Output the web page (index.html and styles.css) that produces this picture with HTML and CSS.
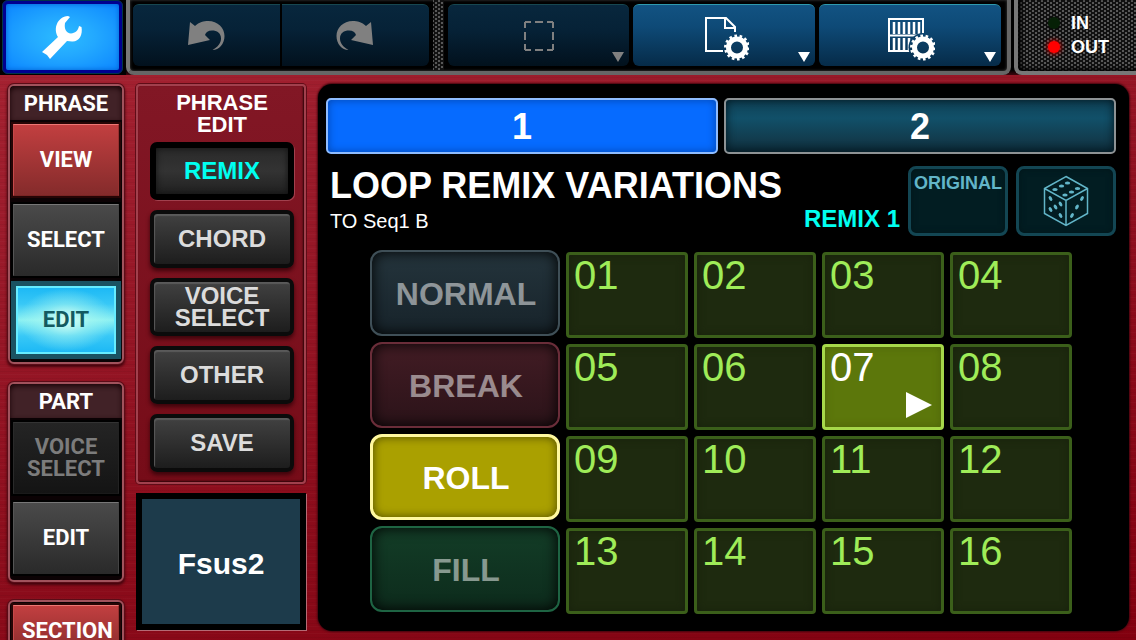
FILE: index.html
```html
<!DOCTYPE html>
<html lang="en">

<head>
    <meta charset="UTF-8">
    <meta name="viewport" content="width=device-width, initial-scale=1.0">
    <title>Loop Remix</title>
    <link rel="stylesheet" href="styles.css">
</head>

<body>
    <div class="app">

        <!-- Toolbar -->
        <header class="toolbar">
            <div class="setup">
                <button class="setup-btn" aria-label="Setup">
                    <svg width="50" height="52" viewBox="0 0 50 52">
                        <path d="M4 41 L20 26 C15 18 19 6 30 5 L32 6 L27 12 C26 18 28 22 33 22.5 C37 22 40 20 41 15 L43.5 16 C45 24 41 31 34 30.5 L29 30 L12 48 L9 44 Z" fill="#fff" />
                    </svg>
                </button>
            </div>
            <div class="tool-frame">
                <div class="tool-group">
                    <button class="tool tool-first" aria-label="Undo" disabled>
                        <svg width="42" height="36" viewBox="0 0 42 36">
                            <path d="M3 27 L5 4 L10 8 C14 4 19 3 23 3 C33 3 39.5 10 39.5 18 C39.5 26 34 32 27.5 32 C33 29 36 25 36 20.5 C36 15 32 12.5 27 12.5 C23 12.5 21 14 20 17 L25 22 Z" fill="#808080" />
                        </svg>
                    </button>
                    <button class="tool tool-last" aria-label="Redo" disabled>
                        <svg width="42" height="36" viewBox="0 0 42 36">
                            <path d="M39 27 L37 4 L32 8 C28 4 23 3 19 3 C9 3 2.5 10 2.5 18 C2.5 26 8 32 14.5 32 C9 29 6 25 6 20.5 C6 15 10 12.5 15 12.5 C19 12.5 21 14 22 17 L17 22 Z" fill="#808080" />
                        </svg>
                    </button>
                </div>
                <div class="mesh divider"></div>
                <button class="tool tool-wide" aria-label="Select range" disabled>
                    <svg width="32" height="32" viewBox="0 0 32 32">
                        <rect x="2" y="2" width="28" height="28" fill="none" stroke="#808080" stroke-width="2" stroke-dasharray="6 4 8 4 6 0" />
                    </svg>
                    <span class="caret"></span>
                </button>
                <button class="tool tool-wide" aria-label="File settings">
                    <svg width="50" height="50" viewBox="0 0 50 50" fill="none" stroke="#fff" stroke-width="2">
                        <path d="M24 40 H7 V7 H27 L36 16 V21 M26 7 V17 H36" />
                        <circle cx="38" cy="36.5" r="8.5" stroke-width="5" />
                        <circle cx="38" cy="36.5" r="11.5" stroke-width="3" pathLength="28" stroke-dasharray="1 1" />
                    </svg>
                    <span class="caret"></span>
                </button>
                <button class="tool tool-wide" aria-label="Keyboard settings">
                    <svg width="50" height="50" viewBox="0 0 50 50" fill="none" stroke="#fff" stroke-width="2">
                        <mask id="gear-gap">
                            <rect width="50" height="50" fill="#fff" stroke="none" />
                            <circle cx="38" cy="36.5" r="14.5" fill="#000" stroke="none" />
                        </mask>
                        <g mask="url(#gear-gap)">
                            <rect x="4" y="8" width="34" height="32" />
                            <path d="M4 24.5 H38" />
                            <path d="M9 11 V23 M14 11 V23 M19 11 V23 M24 11 V23 M29 11 V23 M34 11 V23 M9 27 V39 M14 27 V39 M19 27 V39 M24 27 V39" stroke-width="2.500" />
                        </g>
                        <circle cx="38" cy="36.5" r="8.5" stroke-width="5" />
                        <circle cx="38" cy="36.5" r="11.5" stroke-width="3" pathLength="28" stroke-dasharray="1 1" />
                    </svg>
                    <span class="caret"></span>
                </button>
            </div>
            <div class="mesh status">
                <div class="status-row"><span class="led"></span>IN</div>
                <div class="status-row"><span class="led led-on"></span>OUT</div>
            </div>
        </header>

        <div class="workspace">

            <!-- Sidebar -->
            <nav class="sidebar">
                <section class="side-panel">
                    <h2>PHRASE</h2>
                    <button class="side-btn red">VIEW</button>
                    <button class="side-btn">SELECT</button>
                    <button class="side-btn lit">EDIT</button>
                </section>
                <section class="side-panel">
                    <h2>PART</h2>
                    <button class="side-btn" disabled>VOICE SELECT</button>
                    <button class="side-btn">EDIT</button>
                </section>
                <section class="side-panel no-title">
                    <button class="side-btn red section">SECTION</button>
                </section>
            </nav>

            <!-- Phrase edit menu -->
            <div class="edit-column">
                <section class="edit-menu">
                    <h2>PHRASE EDIT</h2>
                    <button class="menu-btn selected">REMIX</button>
                    <button class="menu-btn">CHORD</button>
                    <button class="menu-btn">VOICE SELECT</button>
                    <button class="menu-btn">OTHER</button>
                    <button class="menu-btn">SAVE</button>
                </section>
                <div class="chord">Fsus2</div>
            </div>

            <!-- Remix screen -->
            <main class="screen">
                <div class="tabs">
                    <button class="tab active">1</button>
                    <button class="tab">2</button>
                </div>
                <div class="screen-head">
                    <div class="heading">
                        <h1>LOOP REMIX VARIATIONS</h1>
                        <p>TO Seq1 B</p>
                    </div>
                    <div class="remix-name">REMIX 1</div>
                    <button class="head-btn original">ORIGINAL</button>
                    <button class="head-btn" aria-label="Random">
                        <svg width="46" height="52" viewBox="0 0 46 52">
                            <path d="M23 1.500 L44.500 13.500 V38.500 L23 50.500 L1.500 38.500 V13.500 Z M1.500 13.500 L23 25.500 L44.500 13.500 M23 25.500 V50.500" fill="none" stroke="#62b5c8" stroke-width="1.500" />
                            <g fill="#62b5c8">
                                <ellipse cx="24.500" cy="8" rx="2.700" ry="1.600" />
                                <ellipse cx="18.500" cy="11" rx="2.700" ry="1.600" />
                                <ellipse cx="12" cy="14.500" rx="2.700" ry="1.600" />
                                <ellipse cx="34.500" cy="13.500" rx="2.700" ry="1.600" />
                                <ellipse cx="28.500" cy="17" rx="2.700" ry="1.600" />
                                <ellipse cx="22" cy="20" rx="2.700" ry="1.600" />
                                <ellipse cx="7.500" cy="23.500" rx="1.600" ry="2.600" transform="rotate(-30 7.500 23.500)" />
                                <ellipse cx="17.500" cy="29" rx="1.600" ry="2.600" transform="rotate(-30 17.500 29)" />
                                <ellipse cx="12.500" cy="32" rx="1.600" ry="2.600" transform="rotate(-30 12.500 32)" />
                                <ellipse cx="7.500" cy="34.500" rx="1.600" ry="2.600" transform="rotate(-30 7.500 34.500)" />
                                <ellipse cx="17.500" cy="40.500" rx="1.600" ry="2.600" transform="rotate(-30 17.500 40.500)" />
                                <ellipse cx="39" cy="23.500" rx="1.600" ry="2.600" transform="rotate(30 39 23.500)" />
                                <ellipse cx="34" cy="32" rx="1.600" ry="2.600" transform="rotate(30 34 32)" />
                                <ellipse cx="29" cy="40.500" rx="1.600" ry="2.600" transform="rotate(30 29 40.500)" />
                            </g>
                        </svg>
                    </button>
                </div>
                <div class="board">
                    <div class="modes">
                        <button class="mode normal">NORMAL</button>
                        <button class="mode break">BREAK</button>
                        <button class="mode roll">ROLL</button>
                        <button class="mode fill">FILL</button>
                    </div>
                    <div class="pads">
                        <button class="pad">01</button>
                        <button class="pad">02</button>
                        <button class="pad">03</button>
                        <button class="pad">04</button>
                        <button class="pad">05</button>
                        <button class="pad">06</button>
                        <button class="pad playing">07<span class="play"></span></button>
                        <button class="pad">08</button>
                        <button class="pad">09</button>
                        <button class="pad">10</button>
                        <button class="pad">11</button>
                        <button class="pad">12</button>
                        <button class="pad">13</button>
                        <button class="pad">14</button>
                        <button class="pad">15</button>
                        <button class="pad">16</button>
                    </div>
                </div>
            </main>
        </div>
    </div>
</body>

</html>
```

FILE: styles.css
```css
* {
    margin: 0;
    padding: 0;
    box-sizing: border-box;
}

body {
    font-family: "Liberation Sans", Arial, sans-serif;
    color: #fff;
    background: #000;
}

button {
    font-family: inherit;
    color: inherit;
    border: none;
    cursor: pointer;
}

svg {
    display: block;
}

.app {
    height: 100vh;
    overflow: hidden;
    display: flex;
    flex-direction: column;
    background:
        repeating-linear-gradient(180deg, #0000000c 0, #0000000c 1px, transparent 1px, transparent 3px, #ffffff06 3px, #ffffff06 4px, transparent 4px, transparent 7px),
        linear-gradient(165deg, #a82433 0%, #9b1b2b 25%, #8c0d1c 60%, #82000f 100%);
}

/* Toolbar */
.toolbar {
    display: flex;
    flex: none;
    height: 75px;
    background: linear-gradient(180deg, #000 0, #000 70px, #3d050d 75px);
}

.setup {
    width: 126px;
    padding: 0 3px 1px 2px;
    background: #000;
}

.setup-btn {
    width: 100%;
    height: 74px;
    display: flex;
    justify-content: center;
    align-items: center;
    border: 4px solid #00008f;
    border-radius: 6px;
    outline: 1px solid #00364a;
    outline-offset: -1px;
    background: radial-gradient(ellipse at center, #2cbcff 0%, #23a9ff 40%, #0c86ff 100%);
    box-shadow: inset 0 0 5px #0060d0;
}

.tool-frame {
    flex: 1;
    display: flex;
    gap: 4px;
    margin-right: 3px;
    padding: 4px 6px 4px 3px;
    border: 4px solid #777;
    border-top: none;
    border-radius: 0 0 8px 8px;
    border-color: #777 #666 #666 #777;
    background: #000;
    box-shadow: inset 0 0 3px #444;
}

.tool-group {
    flex: 296;
    display: flex;
    gap: 2px;
}

.tool {
    position: relative;
    flex: 1;
    height: 62px;
    display: flex;
    justify-content: center;
    align-items: center;
    border-top: 1px solid #2f9aae;
    background: linear-gradient(180deg, #125382 0%, #0e4a77 35%, #062b48 100%);
}

.tool:disabled {
    border-top-color: #174750;
    background: linear-gradient(180deg, #08273d 0%, #062237 40%, #02111d 100%);
    cursor: default;
}

.tool-first {
    border-radius: 6px 0 0 6px;
}

.tool-last {
    border-radius: 0 6px 6px 0;
}

.tool-wide {
    flex: 182;
    border-radius: 6px;
}

.caret {
    position: absolute;
    right: 5px;
    bottom: 4px;
    border: 6px solid transparent;
    border-top: 10px solid #fff;
    border-bottom: none;
}

.tool:disabled .caret {
    border-top-color: #808080;
}

.mesh {
    background:
        radial-gradient(ellipse 2px 1px at 3px 1px, #111 100%, transparent) 0 0 / 6px 4px,
        radial-gradient(ellipse 2px 1px at 3px 1px, #111 100%, transparent) 3px 2px / 6px 4px,
        #585858;
}

.divider {
    width: 11px;
    height: 70px;
    margin-top: -4px;
}

.status {
    width: 122px;
    padding: 11px 0 0 30px;
    border: 4px solid #777;
    border-top: none;
    border-right: none;
    border-bottom-left-radius: 8px;
    box-shadow: inset 3px -2px 4px #000;
}

.status-row {
    display: flex;
    align-items: center;
    gap: 11px;
    font-size: 18px;
    line-height: 24px;
    font-weight: 700;
}

.led {
    width: 12px;
    height: 12px;
    border-radius: 50%;
    background: #062006;
    box-shadow: 0 0 3px #000;
}

.led-on {
    background: #f00;
    box-shadow: 0 0 5px 1px #b00;
}

/* Body */
.workspace {
    flex: 1;
    min-height: 0;
    display: flex;
    align-items: flex-start;
    gap: 12px;
    padding: 9px 7px 0 8px;
}

/* Sidebar */
.sidebar {
    width: 116px;
    display: flex;
    flex-direction: column;
    gap: 18px;
    font-family: Roboto, "Liberation Sans", sans-serif;
    text-align: center;
}

.side-panel {
    display: flex;
    flex-direction: column;
    gap: 8px;
    padding: 0 3px 6px;
    border: 2px solid #a1525c;
    border-radius: 6px;
    background: #0b0204;
    box-shadow: 0 0 0 1px #5a0c17, 0 2px 3px 1px #40030b;
}

.side-panel h2 {
    height: 34px;
    margin: 0 -3px -4px;
    border-radius: 6px 6px 0 0;
    background: #412227;
    box-shadow: inset 0 2px 5px #1b0508;
    font-size: 22px;
    line-height: 36px;
    font-weight: 700;
}

.side-panel.no-title {
    padding-top: 3px;
}

.side-btn {
    height: 72px;
    padding: 0 8px;
    border: 1px solid #555;
    border-color: #777 #444 #2a2a2a #555;
    background: linear-gradient(180deg, #4a4a4a, #2a2a2a);
    box-shadow: 0 0 0 2px #000;
    font-size: 22px;
    line-height: 22px;
    font-weight: 700;
}

.side-btn:disabled {
    border-color: #333 #222 #1a1a1a #2a2a2a;
    background: linear-gradient(180deg, #242424, #141414);
    color: #7c7c7c;
}

.side-btn.red {
    border-color: #ee7774 #96302f #7a2524 #c4494a;
    background: linear-gradient(180deg, #c23f40, #842b2b);
    box-shadow: 0 0 0 2px #260505;
}

.side-btn.lit {
    height: 68px;
    margin: 2px 3px;
    border: 2px solid #66ecff;
    background:
        radial-gradient(ellipse at center, #d8fff4 0%, #b0faf080 35%, transparent 70%),
        linear-gradient(180deg, #1db9f5 0%, #38c8f6 25%, #8cf1f2 50%, #38c8f6 75%, #1db9f5 100%);
    box-shadow: 0 0 0 5px #1a5262, 0 0 5px 1px #3ab6c8;
    color: #135a60;
}

.side-btn.section {
    height: 52px;
}

/* Phrase edit menu */
.edit-column {
    width: 170px;
    display: flex;
    flex-direction: column;
    gap: 9px;
    text-align: center;
}

.edit-menu {
    display: flex;
    flex-direction: column;
    gap: 10px;
    padding: 6px 10px 10px 12px;
    border: 2px solid #a1404d;
    border-radius: 4px;
    background: linear-gradient(180deg, #821725, #760c18);
    box-shadow: 0 0 0 1px #5f0c17, inset -1px -1px 2px #2c0308;
}

.edit-menu h2 {
    margin: 0 20px -4px;
    font-size: 22px;
    line-height: 22px;
    font-weight: 700;
}

.menu-btn {
    height: 58px;
    border: 4px solid #0b0b0b;
    border-radius: 7px;
    background: linear-gradient(180deg, #414141, #1d1d1d);
    box-shadow: inset 1px 2px 1px #5a5a5a, 0 3px 4px #3d040b;
    color: #dcdcdc;
    font-size: 24px;
    line-height: 22px;
    font-weight: 700;
}

.menu-btn.selected {
    border: 6px solid #000;
    background: linear-gradient(180deg, #2a2a2a, #333 50%, #202020);
    box-shadow: inset 0 0 6px #111, 1px 1px 0 #a1404d;
    color: #00fff0;
}

.chord {
    height: 137px;
    display: flex;
    justify-content: center;
    align-items: center;
    padding-top: 4px;
    border: 6px solid #000;
    background: #1d3b4b;
    box-shadow: 1px 1px 0 #b56a74;
    font-size: 30px;
    font-weight: 700;
}

/* Remix screen */
.screen {
    flex: 1;
    padding: 14px 13px 17px 8px;
    border-radius: 14px;
    background: #000;
    box-shadow: 0 0 2px 1px #43050e;
}

.tabs {
    display: flex;
    gap: 6px;
}

.tab {
    flex: 1;
    height: 56px;
    padding-top: 2px;
    border: 2px solid #8d9294;
    border-radius: 5px;
    background: linear-gradient(180deg, #0f4156 0%, #115069 35%, #123c4e 75%, #0c2a38 100%);
    box-shadow: inset 0 0 10px #02141c;
    font-size: 36px;
    font-weight: 700;
}

.tab.active {
    border-color: #8ebcff;
    background: #066bff;
    box-shadow: inset 0 0 8px #0345ad;
}

.screen-head {
    display: flex;
    gap: 8px;
    margin-top: 12px;
}

.heading {
    flex: 1;
    padding-left: 4px;
    white-space: nowrap;
}

.heading h1 {
    font-size: 36px;
    line-height: 40px;
    font-weight: 700;
}

.heading p {
    font-size: 20px;
    line-height: 30px;
}

.remix-name {
    align-self: flex-end;
    margin-bottom: 2px;
    color: #00fff0;
    font-size: 24px;
    line-height: 30px;
    font-weight: 700;
}

.head-btn {
    width: 100px;
    height: 70px;
    display: flex;
    justify-content: center;
    align-items: center;
    border: 3px solid #134653;
    border-radius: 8px;
    background: #021d22;
    box-shadow: inset 0 0 6px #01161a;
    color: #62b5c8;
    font-size: 18px;
    font-weight: 700;
}

.original {
    align-items: flex-start;
    padding-top: 4px;
}

.board {
    display: flex;
    gap: 6px;
    margin-top: 14px;
    padding: 0 44px;
}

.modes {
    width: 190px;
    display: flex;
    flex-direction: column;
    gap: 6px;
}

.mode {
    height: 86px;
    padding: 2px 0 0 2px;
    border: 2px solid #3f4f57;
    border-radius: 12px;
    box-shadow: inset 0 0 14px #000;
    color: #ffffff80;
    font-size: 32px;
    font-weight: 700;
}

.normal {
    background: linear-gradient(180deg, #24343c, #17232a);
}

.break {
    border-color: #6a2d39;
    background: linear-gradient(180deg, #421c24, #2b1319);
}

.roll {
    border: 3px solid #fff8a0;
    background: #aaa000;
    box-shadow: inset 0 0 10px #4e4900;
    color: #fff;
}

.fill {
    border-color: #1e6443;
    background: linear-gradient(180deg, #133d27, #0d2b1c);
}

.pads {
    flex: 1;
    display: grid;
    grid-template-columns: repeat(4, 1fr);
    gap: 6px;
    padding-top: 2px;
}

.pad {
    position: relative;
    height: 86px;
    display: flex;
    align-items: flex-start;
    padding-left: 5px;
    border: 3px solid #3b5f1a;
    border-radius: 4px;
    background: #1e2a0f;
    box-shadow: inset 0 0 8px #18220c;
    color: #9fec58;
    font-size: 40px;
    line-height: 40px;
}

.pad.playing {
    border-color: #a6d84a;
    background: #5c770b;
    box-shadow: inset 0 0 8px #4e650a;
    color: #fff;
}

.play {
    position: absolute;
    right: 9px;
    bottom: 9px;
    border: 13px solid transparent;
    border-left: 26px solid #fff;
    border-right: none;
}
```
